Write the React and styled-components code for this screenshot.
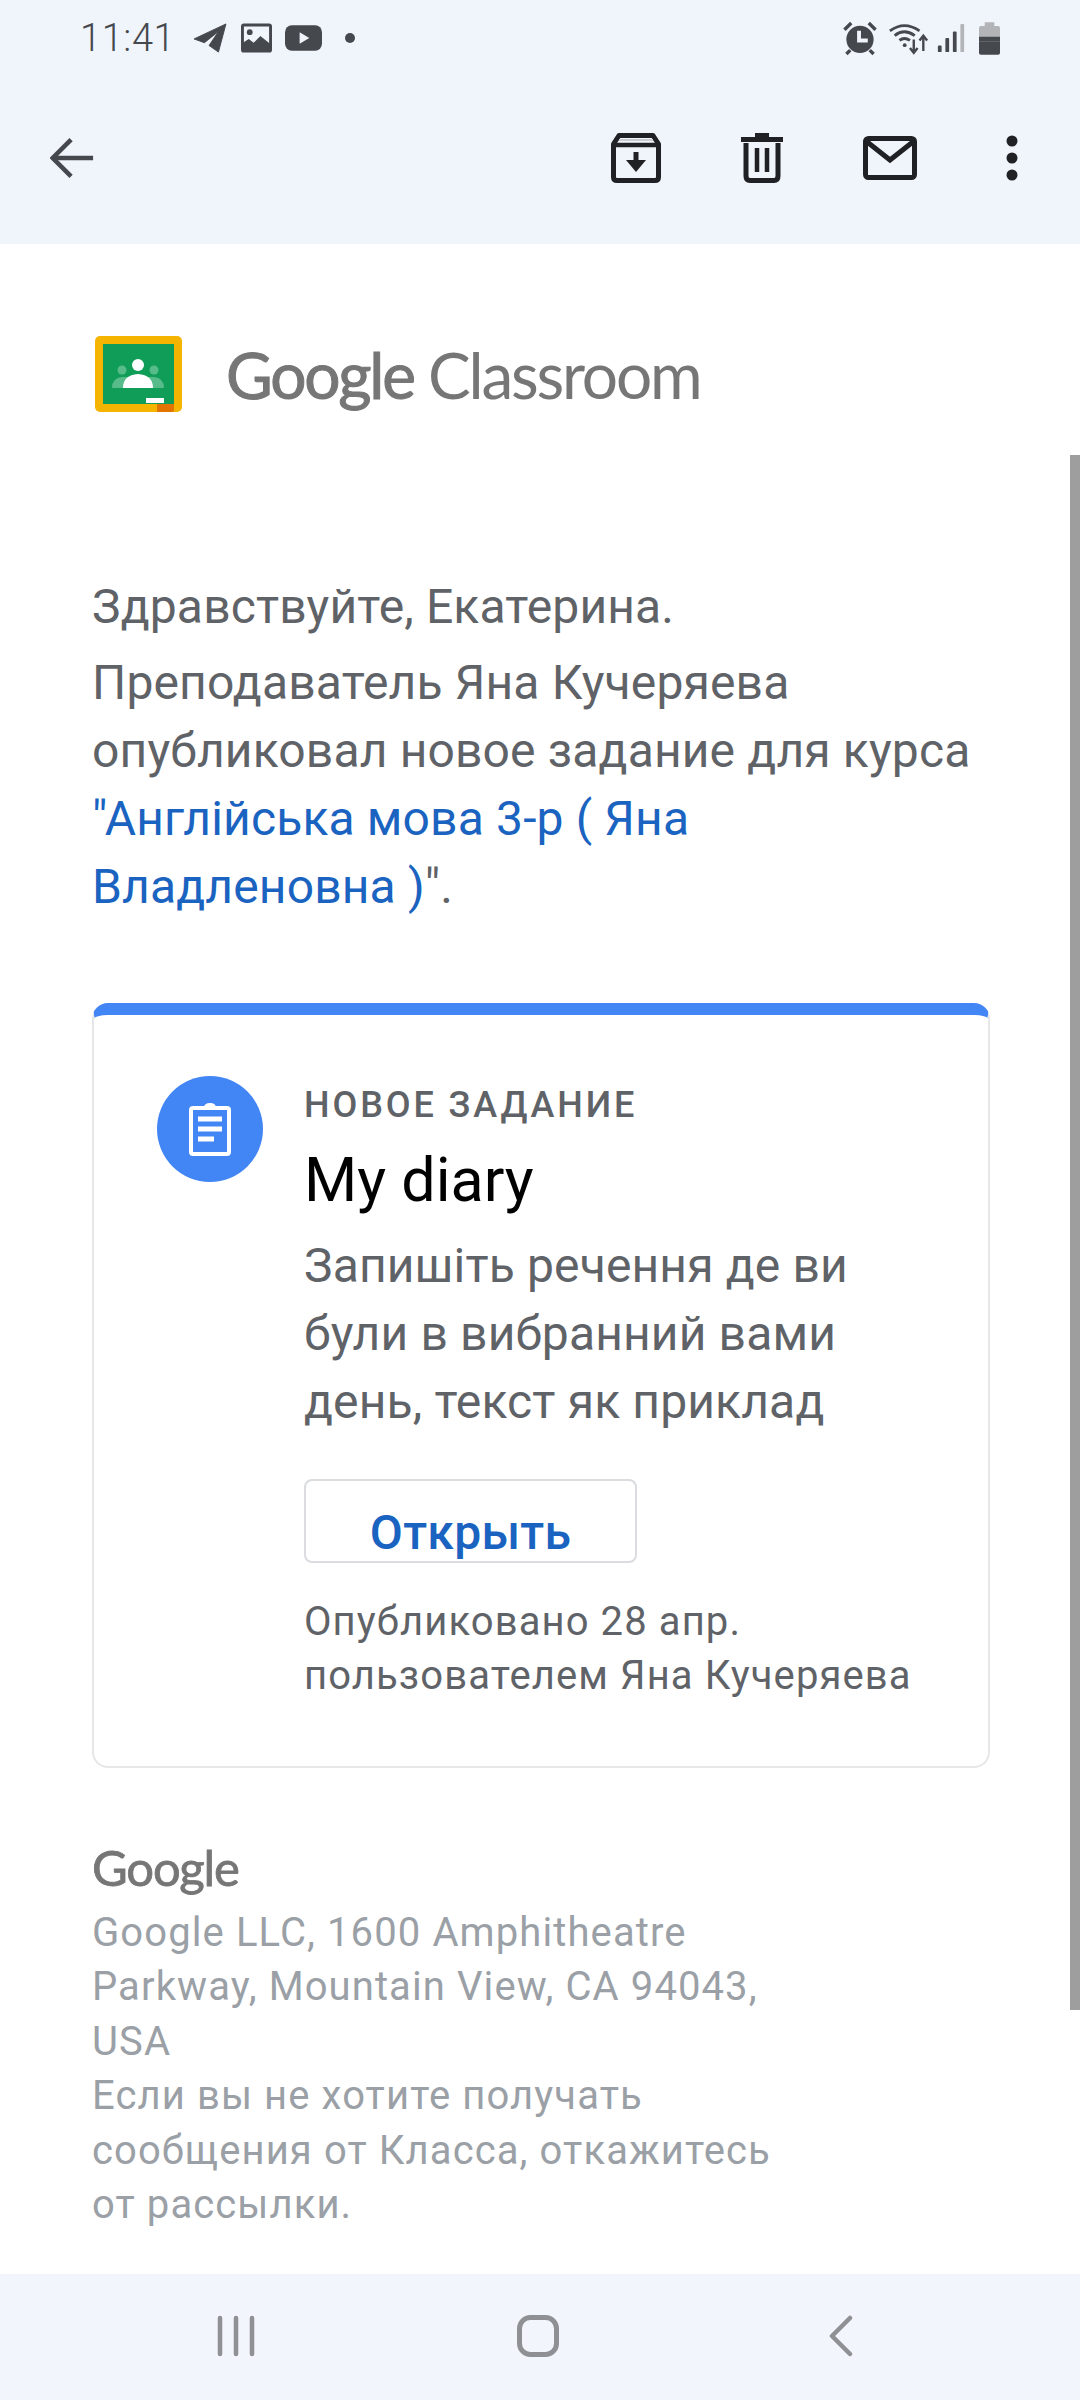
import React from "react";
import styled, { createGlobalStyle } from "styled-components";

const Global = createGlobalStyle`
  html, body { margin: 0; padding: 0; background: #fff; }
  * { box-sizing: border-box; }
`;

const Screen = styled.div`
  position: relative;
  width: 1080px;
  height: 2400px;
  display: flex;
  flex-direction: column;
  overflow: hidden;
  background: #fff;
  font-family: Roboto, "Liberation Sans", sans-serif;
`;

const Header = styled.header`
  height: 244px;
  background: #f0f4fb;
  display: flex;
  flex-direction: column;
`;

const StatusBar = styled.div`
  height: 72px;
  padding: 4px 80px 0 80px;
  display: flex;
  align-items: center;
  justify-content: space-between;
  color: #45484d;
`;

const StatusGroup = styled.div`
  display: flex;
  align-items: center;
`;

const Clock = styled.span`
  font-size: 38px;
  font-weight: 300;
  margin-right: 18px;
  letter-spacing: 0.6px;
`;

const StatusIcon = styled.svg`
  flex: none;
  display: block;
  margin-left: ${(p) => p.$ml || 0}px;
`;

const Toolbar = styled.div`
  flex: 1;
  display: flex;
  align-items: center;
  padding: 0 0 0 50px;
`;

const ToolIcons = styled.div`
  margin-left: auto;
  display: flex;
  align-items: center;
  padding-right: 62px;
  gap: 80px;
`;

const MoreIcon = styled.svg`
  margin-left: 9px;
`;

const Content = styled.main`
  flex: 1;
  padding: 92px 90px 0 92px;
  display: flex;
  flex-direction: column;
`;

const Brand = styled.div`
  display: flex;
  align-items: center;
  gap: 44px;
  margin-left: 3px;
  height: 76px;
`;

const BrandName = styled.div`
  font-family: Lato, sans-serif;
  font-size: 64px;
  letter-spacing: -2.2px;
  color: #767676;
  white-space: nowrap;
`;

const BrandWord = styled.span`
  -webkit-text-stroke: 1px #767676;
`;

const Greeting = styled.p`
  margin: 161px 0 0;
  font-size: 48px;
  line-height: 68px;
  color: #5f6368;
  letter-spacing: 0.15px;
`;

const Intro = styled.p`
  margin: 8px 0 0;
  font-size: 48px;
  line-height: 68px;
  color: #5f6368;
  letter-spacing: 0.15px;
`;

const CourseLink = styled.span`
  color: #1a63c0;
`;

const Card = styled.section`
  margin-top: 82px;
  width: 898px;
  height: 765px;
  border: 2px solid #e6e7e9;
  border-top: 12px solid #4285f4;
  border-radius: 16px;
  padding: 61px 40px 0 63px;
  display: flex;
  gap: 41px;
`;

const Badge = styled.div`
  width: 106px;
  height: 106px;
  border-radius: 50%;
  background: #4285f4;
  display: flex;
  align-items: center;
  justify-content: center;
  flex: none;
`;

const CardBody = styled.div`
  display: flex;
  flex-direction: column;
  align-items: flex-start;
`;

const Kicker = styled.div`
  font-size: 36px;
  font-weight: 500;
  line-height: 40px;
  margin-top: 9px;
  letter-spacing: 2.9px;
  color: #5f6368;
`;

const Title = styled.h2`
  margin: 19px 0 0;
  font-size: 61px;
  font-weight: 400;
  line-height: 72px;
  color: #000;
`;

const Description = styled.p`
  margin: 16px 0 0;
  width: 580px;
  font-size: 48px;
  line-height: 68px;
  letter-spacing: 0.15px;
  color: #5f6368;
`;

const OpenButton = styled.div`
  margin-top: 43px;
  width: 333px;
  height: 84px;
  border: 2px solid #dadce0;
  border-radius: 8px;
  display: flex;
  justify-content: center;
  padding-top: 22px;
  font-size: 48px;
  font-weight: 500;
  line-height: 60px;
  color: #1a63c0;
  letter-spacing: 0.3px;
  white-space: nowrap;
`;

const Published = styled.p`
  margin: 32px 0 0;
  font-size: 40px;
  line-height: 54px;
  letter-spacing: 1.1px;
  color: #5f6368;
  white-space: nowrap;
`;

const Footer = styled.footer`
  margin-top: 69px;
`;

const FooterLogo = styled.div`
  font-family: Lato, sans-serif;
  font-size: 49px;
  line-height: 60px;
  letter-spacing: -1.2px;
  color: #767676;
  -webkit-text-stroke: 0.8px #767676;
`;

const FooterText = styled.p`
  margin: 9px 0 0;
  width: 700px;
  font-size: 40px;
  line-height: 54.4px;
  letter-spacing: 1.1px;
  color: #9aa0a6;
`;

const BottomNav = styled.nav`
  height: 126px;
  background: #f2f5fc;
  display: flex;
  align-items: center;
  padding-bottom: 2px;
`;

const NavSlot = styled.div`
  flex: none;
  width: ${(p) => p.$w}px;
  display: flex;
  justify-content: center;
`;

const Scrollbar = styled.div`
  position: absolute;
  right: 0;
  top: 455px;
  width: 10px;
  height: 1555px;
  background: #9e9e9e;
`;

const Ink = "#1f2124";

const App = () => (
  <Screen>
    <Global />
    <Header>
      <StatusBar>
        <StatusGroup>
          <Clock>11:41</Clock>
          <StatusIcon width="34" height="30" viewBox="0 0 36 32">
            <path d="M1 17 L35 1 L27 31 L17 24 L27 9 L12 21 Z" fill="#45484d" strokeLinejoin="round" stroke="#45484d" strokeWidth="1" />
          </StatusIcon>
          <StatusIcon $ml={14} width="31" height="30" viewBox="0 0 32 30">
            <rect x="1.500" y="1.500" width="29" height="27" rx="1.500" fill="#f0f4fb" stroke="#45484d" strokeWidth="3" />
            <circle cx="9" cy="9" r="3" fill="#45484d" />
            <path d="M2 20 L8 16 L13 20 L20 13 L30 21 V29 H2 Z" fill="#45484d" />
          </StatusIcon>
          <StatusIcon $ml={13} width="37" height="28" viewBox="0 0 38 28">
            <rect width="38" height="26" y="1" rx="7" fill="#45484d" />
            <path d="M15 8 L25 14 L15 20 Z" fill="#f0f4fb" />
          </StatusIcon>
          <StatusIcon $ml={23} width="10" height="10" viewBox="0 0 10 10">
            <circle cx="5" cy="5" r="5" fill="#45484d" />
          </StatusIcon>
        </StatusGroup>
        <StatusGroup>
          <StatusIcon width="36" height="35" viewBox="0 0 36 36">
            <circle cx="18" cy="19" r="14" fill="#45484d" />
            <path d="M17 10 V20 H26" fill="none" stroke="#f0f4fb" strokeWidth="4" />
            <path d="M2 9 L9 2 M34 9 L27 2 M8 30 L4 34 M28 30 L32 34" stroke="#45484d" strokeWidth="3.500" />
          </StatusIcon>
          <StatusIcon $ml={10} width="42" height="33" viewBox="0 0 44 34" fill="none" stroke="#45484d" strokeWidth="3">
            <path d="M2 9 Q17 -2 33 9" />
            <path d="M7 14 Q17 6 28 14" />
            <path d="M12 19 Q17 15 23 19" />
            <circle cx="17.500" cy="24" r="2" fill="#45484d" stroke="none" />
            <path d="M27 18 V31 M23 27 L27 32 L31 27" strokeWidth="2.500" />
            <path d="M37 30 V14 M33 19 L37 14 L41 19" strokeWidth="2.500" />
          </StatusIcon>
          <StatusIcon $ml={7} width="28" height="30" viewBox="0 0 28 32">
            <rect x="0" y="24" width="4" height="7" rx="1" fill="#45484d" />
            <rect x="8" y="16" width="4" height="15" rx="1" fill="#45484d" />
            <rect x="16" y="9" width="4" height="22" rx="1" fill="#45484d" />
            <rect x="24" y="1" width="4" height="30" rx="1" fill="#b2b4b7" />
          </StatusIcon>
          <StatusIcon $ml={14} width="21" height="33" viewBox="0 0 22 34">
            <path d="M6 0 H16 V4 H20 Q22 4 22 6 V15 H0 V6 Q0 4 2 4 H6 Z" fill="#b2b4b7" />
            <path d="M0 20 H22 V32 Q22 34 20 34 H2 Q0 34 0 32 Z" fill="#45484d" />
            <rect y="15" width="22" height="5" fill="#45484d" />
          </StatusIcon>
        </StatusGroup>
      </StatusBar>
      <Toolbar>
        <svg width="44" height="42" viewBox="0 0 48 44" fill="none" stroke="#45484d" strokeWidth="5">
          <path d="M47 22 H4" />
          <path d="M23 2 L3 22 L23 42" />
        </svg>
        <ToolIcons>
          <svg width="50" height="50" viewBox="0 0 50 50" fill="none">
            <path d="M8 2.500 H42 L47.500 11 V44 Q47.500 47.500 44 47.500 H6 Q2.500 47.500 2.500 44 V11 Z" stroke={Ink} strokeWidth="5" strokeLinejoin="round" />
            <path d="M3 12 H47" stroke={Ink} strokeWidth="4.500" />
            <path d="M8 7 H42" stroke="#c9ccd0" strokeWidth="2" />
            <path d="M25 19 V32" stroke={Ink} strokeWidth="5" />
            <path d="M15 27 H35 L25 39 Z" fill={Ink} />
          </svg>
          <svg width="42" height="50" viewBox="0 0 42 50" fill="none">
            <path d="M14 0 H28 V4 H42 V9 H0 V4 H14 Z" fill={Ink} />
            <path d="M5 10 V43 Q5 47.500 9 47.500 H33 Q37 47.500 37 43 V10" stroke={Ink} strokeWidth="5" />
            <path d="M16 15 V39 M26 15 V39" stroke={Ink} strokeWidth="4.500" />
          </svg>
          <svg width="54" height="44" viewBox="0 0 54 44" fill="none">
            <rect x="2.500" y="2.500" width="49" height="39" rx="3" stroke={Ink} strokeWidth="5" />
            <path d="M3 5 L27 24 L51 5" stroke={Ink} strokeWidth="5" />
          </svg>
          <MoreIcon width="12" height="46" viewBox="0 0 12 46">
            <circle cx="6" cy="6" r="5.500" fill={Ink} />
            <circle cx="6" cy="23" r="5.500" fill={Ink} />
            <circle cx="6" cy="40" r="5.500" fill={Ink} />
          </MoreIcon>
        </ToolIcons>
      </Toolbar>
    </Header>
    <Content>
      <Brand>
        <svg width="87" height="76" viewBox="0 0 87 76">
          <rect width="87" height="76" rx="5" fill="#f4b400" />
          <rect x="8" y="8" width="71" height="60" fill="#0f9d58" />
          <path d="M62 68 H79 V74 Q79 76 77 76 H62 Z" fill="#e37400" />
          <rect x="51" y="62" width="18" height="5" fill="#fff" />
          <circle cx="27" cy="34" r="4.500" fill="#57bb8a" />
          <circle cx="59" cy="34" r="4.500" fill="#57bb8a" />
          <path d="M17 52 Q17 42 27 41 H59 Q69 42 69 52 Z" fill="#57bb8a" />
          <circle cx="43" cy="29" r="6" fill="#fff" />
          <path d="M28 52 Q28 39 43 38 Q58 39 58 52 Z" fill="#fff" />
        </svg>
        <BrandName>
          <BrandWord>Google</BrandWord> Classroom
        </BrandName>
      </Brand>
      <Greeting>Здравствуйте, Екатерина.</Greeting>
      <Intro>
        Преподаватель Яна Кучеряева опубликовал новое задание для курса{" "}
        <CourseLink>"Англійська мова 3-р ( Яна Владленовна )</CourseLink>".
      </Intro>
      <Card>
        <Badge>
          <svg width="42" height="54" viewBox="0 0 42 54" fill="none">
            <rect x="2" y="6" width="38" height="46" rx="2" stroke="#fff" strokeWidth="4" />
            <path d="M15 6 Q15 1 21 1 Q27 1 27 6 Z" fill="#fff" />
            <path d="M9 17 H33 M9 27 H33" stroke="#fff" strokeWidth="5" />
            <path d="M9 37 H25" stroke="#fff" strokeWidth="5" />
          </svg>
        </Badge>
        <CardBody>
          <Kicker>НОВОЕ ЗАДАНИЕ</Kicker>
          <Title>My diary</Title>
          <Description>Запишіть речення де ви були в вибранний вами день, текст як приклад</Description>
          <OpenButton>Открыть</OpenButton>
          <Published>
            Опубликовано 28 апр.
            <br />
            пользователем Яна Кучеряева
          </Published>
        </CardBody>
      </Card>
      <Footer>
        <FooterLogo>Google</FooterLogo>
        <FooterText>
          Google LLC, 1600 Amphitheatre Parkway, Mountain View, CA 94043, USA
          <br />
          Если вы не хотите получать сообщения от Класса, откажитесь от рассылки.
        </FooterText>
      </Footer>
    </Content>
    <BottomNav>
      <NavSlot $w={472}>
        <svg width="38" height="42" viewBox="0 0 38 42" stroke="#8e9094" strokeWidth="4.500" strokeLinecap="round">
          <path d="M3 3 V39 M19 3 V39 M35 3 V39" />
        </svg>
      </NavSlot>
      <NavSlot $w={132}>
        <svg width="42" height="42" viewBox="0 0 42 42" fill="none">
          <rect x="2.500" y="2.500" width="37" height="37" rx="11" stroke="#8e9094" strokeWidth="5" />
        </svg>
      </NavSlot>
      <NavSlot $w={474}>
        <svg width="24" height="42" viewBox="0 0 24 42" fill="none" stroke="#8e9094" strokeWidth="4.500" strokeLinecap="round" strokeLinejoin="round">
          <path d="M21 3 L3 21 L21 39" />
        </svg>
      </NavSlot>
    </BottomNav>
    <Scrollbar />
  </Screen>
);

export default App;
